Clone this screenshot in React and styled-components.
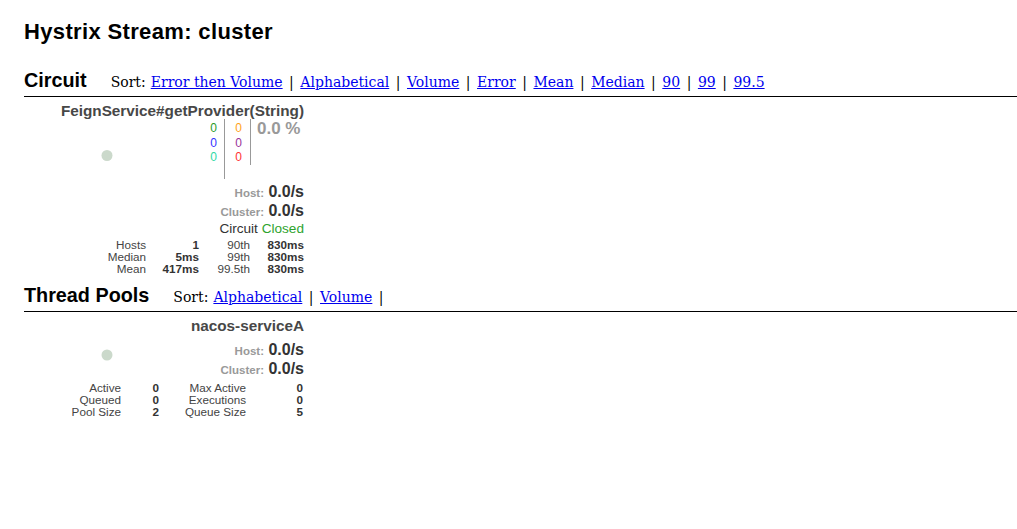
import React from 'react'
import styled, { createGlobalStyle } from 'styled-components'

const GlobalStyle = createGlobalStyle`
  body {
    margin: 0;
    background: #fff;
    font-family: "Liberation Sans", Arial, sans-serif;
  }
`

const Page = styled.div`
  padding: 19px 0 40px 24px;
`

const Title = styled.h2`
  margin: 0;
  font-size: 22px;
  line-height: 26px;
  letter-spacing: 0.35px;
  font-weight: bold;
  color: #000;
`

const SectionHeader = styled.div`
  display: flex;
  align-items: baseline;
  margin-top: ${p => p.top || 0}px;
  padding-bottom: 4px;
  border-bottom: 1px solid #000;
  line-height: 24px;
`

const SectionTitle = styled.h3`
  margin: 0;
  font-size: 19.8px;
  font-weight: bold;
  color: #000;
`

const Sort = styled.div`
  margin-left: 24px;
  font-family: "DejaVu Serif", serif;
  font-size: 14px;
  line-height: 18px;
  color: #000;

  a {
    color: #0000ee;
    text-decoration: underline;
  }
`

const SortLabel = styled.span`
  margin-right: 5px;
`

const Sep = styled.span`
  padding: 0 6.5px;
`

const Card = styled.div`
  width: 280px;
  padding: 6px 0 ${p => p.bottom || 0}px;
  color: #333;
`

const Name = styled.div`
  text-align: right;
  font-size: 15.3px;
  line-height: 16px;
  font-weight: bold;
  color: #474747;
`

const TopRow = styled.div`
  display: flex;
  align-items: flex-start;
`

const Chart = styled.svg`
  flex: 1;
  display: block;
`

const Counters = styled.div`
  display: flex;
  align-items: flex-start;
  font-size: 12px;
  line-height: 14.5px;
`

const CounterCol = styled.div`
  box-sizing: border-box;
  width: 26px;
  height: ${p => p.h}px;
  padding: 2px ${p => p.pr}px 0 0;
  border-right: 1px solid #999;
  text-align: right;
`

const Count = styled.div`
  color: ${p => p.c};
`

const ErrorRate = styled.div`
  width: 53px;
  padding-left: 6px;
  box-sizing: border-box;
  font-size: 17px;
  line-height: 20px;
  font-weight: bold;
  color: #999;
`

const Rates = styled.div`
  margin-top: ${p => p.top || 0}px;
  text-align: right;
  line-height: 19px;
`

const RateLine = styled.div`
  font-size: 16px;
  font-weight: bold;
  color: #333;
`

const RateLabel = styled.span`
  font-size: 11.5px;
  line-height: 12px;
  color: #999;
`

const Status = styled.div`
  text-align: right;
  font-size: 13.6px;
  line-height: 17px;
  color: #333;

  span {
    color: #2ea32e;
  }
`

const Stats = styled.div`
  display: grid;
  grid-template-columns: ${p => p.cols};
  margin-top: ${p => p.top || 0}px;
  font-size: 11.7px;
  line-height: ${p => p.lh || 12}px;
  text-align: right;
`

const StatLabel = styled.div`
  color: #444;
`

const StatValue = styled.div`
  font-weight: bold;
  color: #333;
`

const HealthChart = ({ h, cy }) => (
  <Chart height={h}>
    <circle cx="83" cy={cy} r="5.5" fill="#cbd9cb" />
  </Chart>
)

const circuitStats = [
  ['Hosts', '1', '90th', '830ms'],
  ['Median', '5ms', '99th', '830ms'],
  ['Mean', '417ms', '99.5th', '830ms'],
]

const poolStats = [
  ['Active', '0', 'Max Active', '0'],
  ['Queued', '0', 'Executions', '0'],
  ['Pool Size', '2', 'Queue Size', '5'],
]

const StatGrid = ({ rows, cols, top, lh }) => (
  <Stats cols={cols} top={top} lh={lh}>
    {rows.map(r => (
      <React.Fragment key={r[0]}>
        <StatLabel>{r[0]}</StatLabel>
        <StatValue>{r[1]}</StatValue>
        <StatLabel>{r[2]}</StatLabel>
        <StatValue>{r[3]}</StatValue>
      </React.Fragment>
    ))}
  </Stats>
)

const SortLinks = ({ items, trailing }) => (
  <Sort>
    <SortLabel>Sort:</SortLabel>
    {items.map((it, i) => (
      <React.Fragment key={it}>
        <a href="#">{it}</a>
        {(i < items.length - 1 || trailing) && <Sep>|</Sep>}
      </React.Fragment>
    ))}
  </Sort>
)

export default function App() {
  return (
    <Page>
      <GlobalStyle />
      <Title>Hystrix Stream: cluster</Title>

      <SectionHeader top={23}>
        <SectionTitle>Circuit</SectionTitle>
        <SortLinks items={['Error then Volume', 'Alphabetical', 'Volume', 'Error', 'Mean', 'Median', '90', '99', '99.5']} />
      </SectionHeader>

      <Card bottom={8}>
        <Name>FeignService#getProvider(String)</Name>
        <TopRow>
          <HealthChart h={61} cy={36.5} />
          <Counters>
            <CounterCol h={60} pr={7}>
              <Count c="#2a9a2a">0</Count>
              <Count c="#3333ff">0</Count>
              <Count c="#2fd9a5">0</Count>
            </CounterCol>
            <CounterCol h={46} pr={8}>
              <Count c="#ffa31a">0</Count>
              <Count c="#993399">0</Count>
              <Count c="#ff3333">0</Count>
            </CounterCol>
            <ErrorRate>0.0 %</ErrorRate>
          </Counters>
        </TopRow>
        <Rates top={2}>
          <RateLine><RateLabel>Host:</RateLabel> 0.0/s</RateLine>
          <RateLine><RateLabel>Cluster:</RateLabel> 0.0/s</RateLine>
        </Rates>
        <Status>Circuit <span>Closed</span></Status>
        <StatGrid rows={circuitStats} cols="122px 53px 51px 54px" top={2} />
      </Card>

      <SectionHeader>
        <SectionTitle>Thread Pools</SectionTitle>
        <SortLinks items={['Alphabetical', 'Volume']} trailing />
      </SectionHeader>

      <Card>
        <Name>nacos-serviceA</Name>
        <TopRow>
          <HealthChart h={44} cy={21} />
          <Rates top={6}>
            <RateLine><RateLabel>Host:</RateLabel> 0.0/s</RateLine>
            <RateLine><RateLabel>Cluster:</RateLabel> 0.0/s</RateLine>
          </Rates>
        </TopRow>
        <StatGrid rows={poolStats} cols="97px 38px 87px 57px" top={4} lh={12} />
      </Card>
    </Page>
  )
}
